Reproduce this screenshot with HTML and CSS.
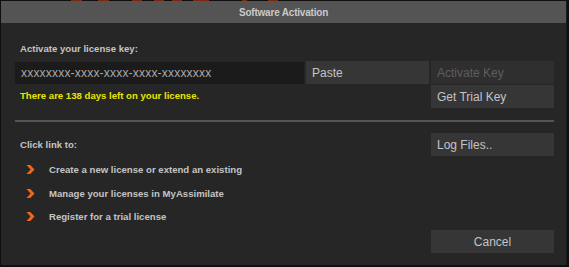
FILE: index.html
```html
<!DOCTYPE html>
<html>
<head>
<meta charset="utf-8">
<link rel="stylesheet" href="styles.css">
</head>
<body>
<div class="backdrop-top">
  <span class="bit b1"></span><span class="bit b2"></span><span class="bit b3"></span><span class="bit b4"></span><span class="bit b5"></span><span class="bit b6"></span><span class="bit b7"></span><span class="bit b8"></span>
</div>
<div class="dialog">
  <div class="titlebar">Software Activation</div>
  <div class="content">
    <div class="section">
      <div class="label">Activate your license key:</div>
      <div class="row">
        <div class="keyfield">xxxxxxxx-xxxx-xxxx-xxxx-xxxxxxxx</div>
        <div class="btn">Paste</div>
        <div class="btn disabled">Activate Key</div>
      </div>
      <div class="row row2">
        <div class="notice">There are 138 days left on your license.</div>
        <div class="btn">Get Trial Key</div>
      </div>
    </div>
    <div class="separator"></div>
    <div class="lower">
      <div class="links">
        <div class="label">Click link to:</div>
        <ul class="linklist">
          <li><span class="chev"><svg width="9" height="9" viewBox="0 0 9 9"><path d="M0.5 0 L4.3 0 L8.5 4.5 L4.3 9 L0.5 9 L4.5 4.5 Z" fill="#f0661a"/></svg></span>Create a new license or extend an existing</li>
          <li><span class="chev"><svg width="9" height="9" viewBox="0 0 9 9"><path d="M0.5 0 L4.3 0 L8.5 4.5 L4.3 9 L0.5 9 L4.5 4.5 Z" fill="#f0661a"/></svg></span>Manage your licenses in MyAssimilate</li>
          <li><span class="chev"><svg width="9" height="9" viewBox="0 0 9 9"><path d="M0.5 0 L4.3 0 L8.5 4.5 L4.3 9 L0.5 9 L4.5 4.5 Z" fill="#f0661a"/></svg></span>Register for a trial license</li>
        </ul>
      </div>
      <div class="side">
        <div class="btn">Log Files..</div>
        <div class="btn center">Cancel</div>
      </div>
    </div>
  </div>
</div>
</body>
</html>
```

FILE: styles.css
```css
html, body {
  margin: 0;
  padding: 0;
  background: #0f0f0f;
  width: 569px;
  height: 267px;
  overflow: hidden;
  font-family: "Liberation Sans", Arial, sans-serif;
}

.backdrop-top {
  height: 1px;
  display: flex;
  position: relative;
}

.bit {
  position: absolute;
  top: 0;
  height: 1px;
  background: #7a2a0c;
}
.b1 { left: 71px; width: 11px; }
.b2 { left: 98px; width: 11px; }
.b3 { left: 132px; width: 10px; }
.b4 { left: 154px; width: 10px; }
.b5 { left: 172px; width: 10px; }
.b6 { left: 193px; width: 16px; }
.b7 { left: 242px; width: 5px; }
.b8 { left: 268px; width: 10px; }

.dialog {
  margin-left: 1px;
  width: 565px;
  height: 264px;
  background: #262626;
  border-right: 1px solid #1a1a1a;
  display: flex;
  flex-direction: column;
}

.titlebar {
  height: 22px;
  background: #545454;
  color: #c9c9c9;
  font-weight: bold;
  font-size: 10px;
  letter-spacing: -0.2px;
  display: flex;
  align-items: center;
  justify-content: center;
}

.content {
  flex: 1;
  padding: 16px 12px 0 14px;
  display: flex;
  flex-direction: column;
}

.label {
  color: #c4c4c4;
  font-weight: bold;
  font-size: 9.6px;
  padding-left: 5px;
  height: 22px;
  line-height: 20px;
}

.row {
  display: flex;
  gap: 2px;
  height: 23px;
}

.row2 {
  margin-top: 1px;
}

.keyfield {
  width: 289px;
  margin-top: 1px;
  height: 22px;
  background: #1b1b1b;
  color: #a9a9a9;
  font-size: 12px;
  letter-spacing: 0.2px;
  line-height: 22px;
  padding-left: 6px;
  box-sizing: border-box;
}

.notice {
  width: 414px;
  color: #e6e600;
  font-weight: bold;
  font-size: 9.6px;
  padding-left: 5px;
  box-sizing: border-box;
  line-height: 23px;
  margin-top: -1px;
}

.btn {
  width: 123px;
  height: 23px;
  background: #363636;
  color: #c4c4c4;
  font-size: 12px;
  line-height: 24px;
  padding-left: 6px;
  box-sizing: border-box;
}

.btn.disabled {
  background: #2f2f2f;
  color: #5e5e5e;
}

.btn.center {
  text-align: center;
  padding-left: 0;
}

.separator {
  margin-top: 12px;
  height: 2px;
  width: 539px;
  background: #555555;
}

.lower {
  display: flex;
  justify-content: space-between;
  margin-top: 11px;
}

.links {
  padding-top: 1px;
}

.links .label {
  height: 24px;
  line-height: 22px;
}

.linklist {
  list-style: none;
  margin: 0;
  padding: 0;
}

.linklist li {
  display: flex;
  align-items: center;
  height: 23.5px;
  color: #c4c4c4;
  font-weight: bold;
  font-size: 9.6px;
}

.chev {
  width: 9px;
  height: 9px;
  margin-left: 11px;
  margin-right: 14px;
  display: flex;
}

.side {
  display: flex;
  flex-direction: column;
  justify-content: space-between;
  height: 120px;
}
```
